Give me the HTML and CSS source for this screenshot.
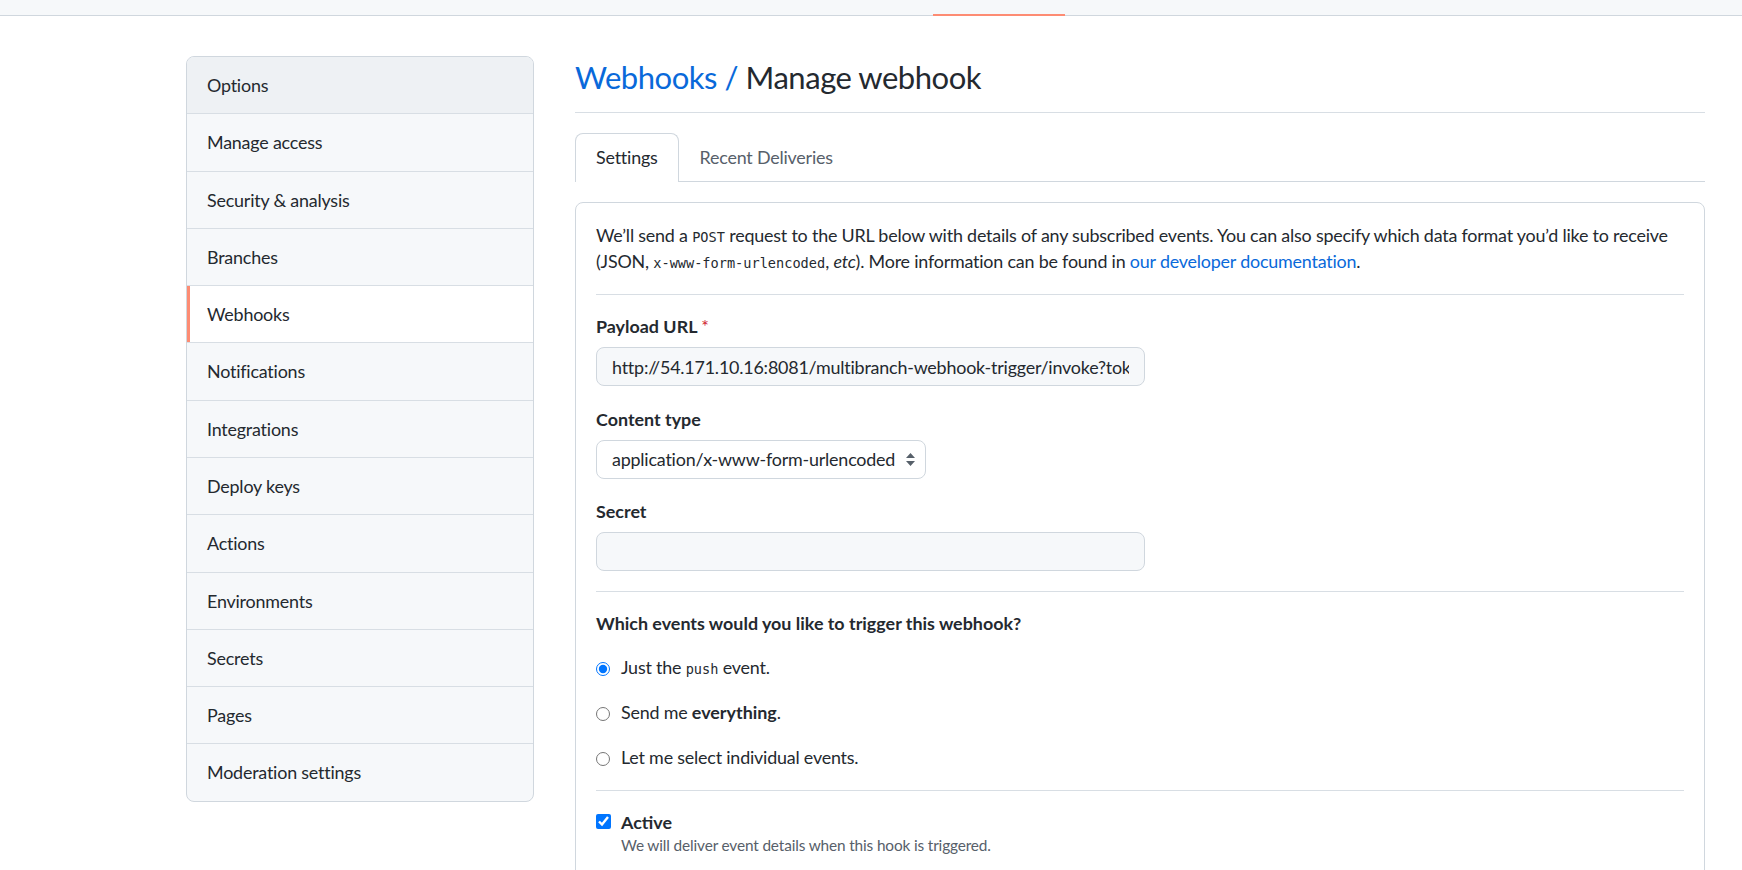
FILE: index.html
```html
<!DOCTYPE html>
<html lang="en">
<head>
<meta charset="utf-8">
<title>Manage webhook</title>
<link rel="stylesheet" href="styles.css">
</head>
<body>
<header class="repo-header">
  <nav class="repo-nav">
    <span class="repo-nav-selected"></span>
  </nav>
</header>
<div class="layout">
  <aside class="sidebar">
    <nav class="menu">
      <a class="menu-item menu-item-hover" href="#">Options</a>
      <a class="menu-item" href="#">Manage access</a>
      <a class="menu-item" href="#">Security &amp; analysis</a>
      <a class="menu-item" href="#">Branches</a>
      <a class="menu-item selected" href="#">Webhooks</a>
      <a class="menu-item" href="#">Notifications</a>
      <a class="menu-item" href="#">Integrations</a>
      <a class="menu-item" href="#">Deploy keys</a>
      <a class="menu-item" href="#">Actions</a>
      <a class="menu-item" href="#">Environments</a>
      <a class="menu-item" href="#">Secrets</a>
      <a class="menu-item" href="#">Pages</a>
      <a class="menu-item" href="#">Moderation settings</a>
    </nav>
  </aside>
  <main class="main">
    <div class="subhead">
      <h2 class="subhead-heading"><a class="link" href="#">Webhooks /</a> Manage webhook</h2>
    </div>
    <div class="tabnav">
      <a class="tabnav-tab selected" href="#">Settings</a>
      <a class="tabnav-tab" href="#">Recent Deliveries</a>
    </div>
    <div class="box">
      <form class="hook-form">
        <p class="intro">We’ll send a <code>POST</code> request to the URL below with details of any subscribed events. You can also specify which data format you’d like to receive (JSON, <code>x-www-form-urlencoded</code>, <em>etc</em>). More information can be found in <a class="link" href="#">our developer documentation</a>.</p>
        <hr class="divider">
        <div class="form-group">
          <label class="form-label" for="url">Payload URL <span class="required">*</span></label>
          <input class="form-control" id="url" type="text" value="http://54.171.10.16:8081/multibranch-webhook-trigger/invoke?token=jenkins-webhook">
        </div>
        <div class="form-group">
          <label class="form-label" for="ctype">Content type</label>
          <span class="select-wrap">
            <select class="form-select" id="ctype">
              <option>application/x-www-form-urlencoded</option>
              <option>application/json</option>
            </select>
            <svg class="select-arrows" width="9" height="13" viewBox="0 0 9 13"><path d="M4.5 0 L9 5 H0 Z M4.5 13 L0 8 H9 Z" fill="#57606a"/></svg>
          </span>
        </div>
        <div class="form-group">
          <label class="form-label" for="secret">Secret</label>
          <input class="form-control" id="secret" type="password" value="">
        </div>
        <hr class="divider">
        <div class="events">
          <h3 class="form-label events-title">Which events would you like to trigger this webhook?</h3>
          <label class="radio-row"><input type="radio" name="events" checked><span>Just the <code>push</code> event.</span></label>
          <label class="radio-row"><input type="radio" name="events"><span>Send me <strong>everything</strong>.</span></label>
          <label class="radio-row"><input type="radio" name="events"><span>Let me select individual events.</span></label>
        </div>
        <hr class="divider">
        <div class="active-group">
          <label class="check-row"><input type="checkbox" checked><strong>Active</strong></label>
          <p class="note">We will deliver event details when this hook is triggered.</p>
        </div>
      </form>
    </div>
  </main>
</div>
</body>
</html>
```
FILE: styles.css
```css
* { box-sizing: border-box; }
html, body { margin: 0; background: #ffffff; }
body {
  font-family: "Segoe UI", Lato, "Noto Sans", sans-serif;
  font-size: 17.9px;
  letter-spacing: -0.2px;
  color: #24292f;
}
a { text-decoration: none; }
.link { color: #0969da; }
strong { letter-spacing: 0; }

.repo-header {
  height: 16px;
  background: #f6f8fa;
  border-bottom: 1px solid #d0d7de;
  display: flex;
  align-items: flex-end;
}
.repo-nav { display: flex; margin-left: 933px; margin-bottom: -1px; }
.repo-nav-selected { display: block; width: 132px; height: 2px; background: #fd8c73; }

.layout {
  display: flex;
  gap: 41px;
  padding: 40px 37px 0 186px;
}
.sidebar { width: 348px; flex: none; }
.main { flex: 1; min-width: 0; }

.menu {
  border: 1px solid #d0d7de;
  border-radius: 8px;
  background: #f6f8fa;
  overflow: hidden;
}
.menu-item {
  display: block;
  padding: 16px 20px;
  line-height: 24.28px;
  border-bottom: 1px solid #d8dee4;
  color: #24292f;
}
.menu-item:last-child { border-bottom: 0; }
.menu-item-hover { background: #eef1f4; }
.menu-item.selected { background: #ffffff; box-shadow: inset 3px 0 0 #fd8c73; }

.subhead { border-bottom: 1px solid #d8dee4; padding-bottom: 13px; }
.subhead-heading {
  margin: 0;
  font-size: 31px;
  letter-spacing: -0.46px;
  font-weight: 400;
  line-height: 43px;
}

.tabnav {
  display: flex;
  margin-top: 20px;
  border-bottom: 1px solid #d0d7de;
}
.tabnav-tab {
  display: block;
  height: 49px;
  margin-bottom: -1px;
  padding: 0 20px;
  line-height: 47px;
  border: 1px solid transparent;
  border-bottom: 0;
  border-radius: 8px 8px 0 0;
  color: #57606a;
}
.tabnav-tab.selected { background: #fff; border-color: #d0d7de; color: #24292f; }

.box {
  margin-top: 20px;
  border: 1px solid #d0d7de;
  border-radius: 8px;
  padding: 19px 20px 40px;
}
.intro { margin: 0; line-height: 26px; }
code {
  font-family: "DejaVu Sans Mono", "Liberation Mono", monospace;
  font-size: 13.6px;
  letter-spacing: 0;
  line-height: 1;
}
.divider { margin: 20px 0 18px; border: 0; border-top: 1px solid #d8dee4; height: 0; }

.form-group { margin-bottom: 19.6px; }
.form-label {
  display: block;
  margin: 0 0 8px;
  font-size: 17.9px;
  font-weight: 700;
  letter-spacing: 0;
  line-height: 26px;
}
.required { color: #cf222e; font-weight: 400; }
.form-control {
  display: block;
  width: 549px;
  height: 39px;
  padding: 0 15px;
  font: inherit;
  letter-spacing: -0.2px;
  color: #24292f;
  background: #f6f8fa;
  border: 1px solid #d0d7de;
  border-radius: 8px;
}
.select-wrap { position: relative; display: inline-block; }
.form-select {
  display: block;
  width: 330px;
  height: 39px;
  padding: 0 24px 0 15px;
  font: inherit;
  letter-spacing: -0.2px;
  color: #24292f;
  background: #ffffff;
  border: 1px solid #d0d7de;
  border-radius: 8px;
  appearance: none;
  -webkit-appearance: none;
}
.select-arrows { position: absolute; right: 11px; top: 13px; pointer-events: none; }

.events-title { margin-bottom: 18px; }
.radio-row {
  display: flex;
  align-items: flex-start;
  gap: 11px;
  line-height: 26px;
  margin-bottom: 18.7px;
}
.radio-row:last-child { margin-bottom: 0; }
.radio-row input { width: 14px; height: 14px; margin: 8px 0 0; flex: none; }

.check-row {
  display: flex;
  align-items: flex-start;
  gap: 10px;
  line-height: 26px;
}
.check-row input { width: 15px; height: 15px; margin: 5px 0 0; flex: none; }
.note {
  margin: 0 0 0 25px;
  font-size: 15.4px;
  letter-spacing: -0.15px;
  line-height: 20px;
  color: #57606a;
}
```
